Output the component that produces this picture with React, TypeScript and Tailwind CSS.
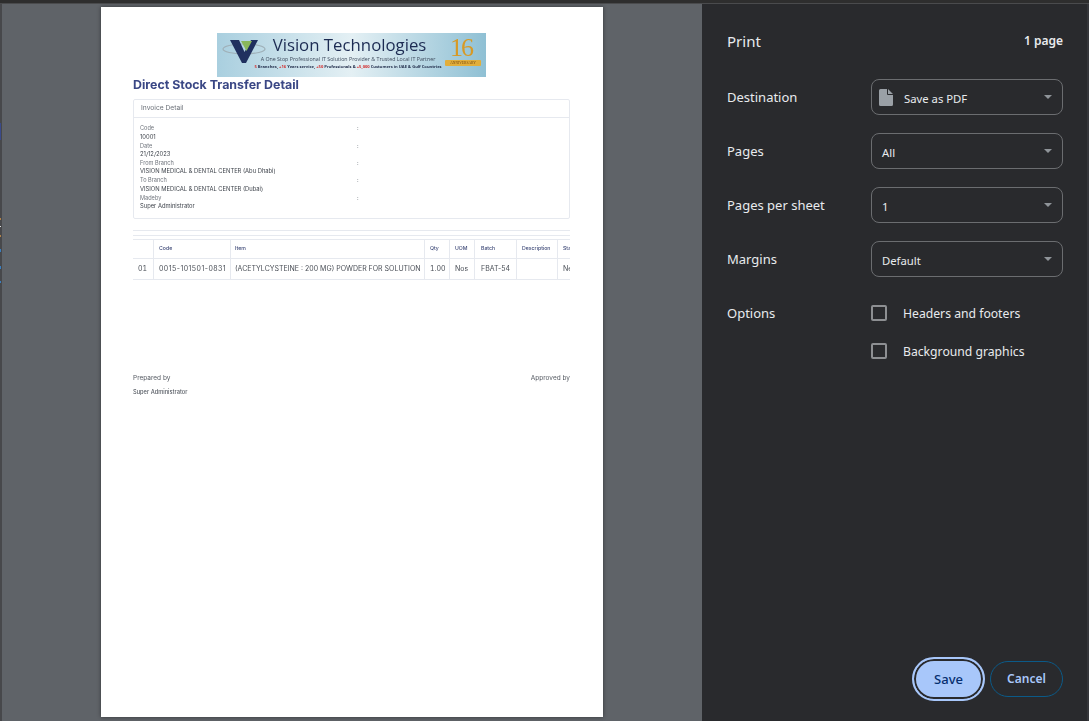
import React from "react";

const pageFont = { fontFamily: '"Inter", "Noto Sans", sans-serif' };

const details = [
  ["Code", "10001"],
  ["Date", "21/12/2023"],
  ["From Branch", "VISION MEDICAL & DENTAL CENTER (Abu Dhabi)"],
  ["To Branch", "VISION MEDICAL & DENTAL CENTER (Dubai)"],
  ["Madeby", "Super Administrator"],
];

const columns = [
  { label: "", value: "01", width: "w-[21px]", pad: "pl-[5px]", cell: "tabular-nums" },
  { label: "Code", value: "0015-101501-0831", width: "w-[77px]", pad: "pl-[5px]", cell: "tracking-[0.45px]" },
  { label: "Item", value: "(ACETYLCYSTEINE : 200 MG) POWDER FOR SOLUTION", width: "w-[194px]", pad: "pl-[4px]", cell: "text-[6.8px]" },
  { label: "Qty", value: "1.00", width: "w-[25px]", pad: "pl-[5px]", cell: "tabular-nums" },
  { label: "UOM", value: "Nos", width: "w-[25px]", pad: "pl-[5px]", cell: "" },
  { label: "Batch", value: "FBAT-54", width: "w-[42px]", pad: "pl-[6px]", cell: "" },
  { label: "Description", value: "", width: "w-[41px]", pad: "pl-[5px]", cell: "" },
  { label: "Status", value: "New", width: "w-[40px]", pad: "pl-[5px]", cell: "" },
];

// bits of the page behind the dialog that show along the left edge
const edgeMarks = [
  { gap: "mt-[119px]", size: "h-[17px]", color: "bg-[#3a4a8a]" },
  { gap: "mt-[78px]", size: "h-[2px]", color: "bg-[#b0824a]" },
  { gap: "mt-[6px]", size: "h-[1px]", color: "bg-[#e0e0e0]" },
  { gap: "mt-[8px]", size: "h-[2px]", color: "bg-[#b0824a]" },
  { gap: "mt-[12px]", size: "h-[3px]", color: "bg-[#3a7fc0]" },
  { gap: "mt-[14px]", size: "h-[3px]", color: "bg-[#3a7fc0]" },
  { gap: "mt-[12px]", size: "h-[2px]", color: "bg-[#3a7fc0]" },
];

function Logo() {
  return (
    <div className="mx-auto flex h-[44px] w-[269px] bg-gradient-to-r from-[#a9cfdf] via-[#e4f0f4] to-[#8fc0d4]">
      <svg width="46" height="44" viewBox="0 0 46 44" className="ml-[4px] shrink-0">
        <ellipse cx="23" cy="16" rx="21" ry="5" fill="none" stroke="#9fb0b8" strokeWidth="1.2" />
        <path d="M9 7h9l5.500 12L30 7h7L25 30h-4Z" fill="#20305f" />
        <path d="M20 8h11l-5.500 10Z" fill="#8ab85a" />
      </svg>
      <div className="flex min-w-0 flex-1 flex-col items-center pt-[1px]" style={{ fontFamily: '"Open Sans", sans-serif' }}>
        <div className="-ml-[14px] text-[16.800px] leading-[22px] whitespace-nowrap text-[#1c2b52]">Vision Technologies</div>
        <div className="-ml-[17px] text-[5.3px] leading-[7px] whitespace-nowrap text-[#3d4a5c]">
          A One Stop Professional IT Solution Provider &amp; Trusted Local IT Partner
        </div>
        <div className="-ml-[17px] text-[4.100px] leading-[8px] font-bold whitespace-nowrap text-[#24304d]">
          <span className="text-[#d22b2b]">5</span> Branches, <span className="text-[#d22b2b]">+16</span> Years service,{" "}
          <span className="text-[#d22b2b]">+50</span> Professionals &amp; <span className="text-[#d22b2b]">+5,000</span>{" "}
          Customers in UAE &amp; Gulf Countries
        </div>
      </div>
      <div className="mr-[6px] flex w-[34px] shrink-0 flex-col items-center pt-[4px]" style={{ fontFamily: '"Liberation Serif", serif' }}>
        <div className="-ml-[4px] text-[26px] leading-[22px] tracking-[-2px] text-[#d79a26]">16</div>
        <div className="mt-[1px] w-[36px] rounded-[1px] bg-[#e2ae3a] text-center text-[3.600px] leading-[6px] text-[#7a4a10]">ANNIVERSARY</div>
      </div>
    </div>
  );
}

function InvoicePage() {
  return (
    <div className="mx-auto mt-[3px] h-[710px] w-[502px] bg-white pt-[26px] pr-[33px] pl-[32px] shadow-[0_0_4px_rgba(0,0,0,0.45)]" style={pageFont}>
      <div className="blur-[0.25px]">
        <Logo />
        <h1 className="mt-[1px] text-[12.4px] leading-[14px] font-bold text-[#3a4785]">Direct Stock Transfer Detail</h1>
        <div className="mt-[7px] h-[120px] rounded-[2px] border border-[#e6e9ef]">
          <div className="flex h-[18px] items-center border-b border-[#e6e9ef] pl-[7px] text-[6.7px] text-[#6b7078]">Invoice Detail</div>
          <div className="pt-[6px] pl-[6px]">
            {details.map(([label, value]) => (
              <div key={label}>
                <div className="flex h-[8.7px] items-center text-[5.6px] text-[#6f747c]">
                  <span className="w-[217px]">{label}</span>
                  <span>:</span>
                </div>
                <div className="flex h-[8.7px] items-center text-[5.8px] text-[#3f444c]">{value}</div>
              </div>
            ))}
          </div>
        </div>
        <div className="mt-[11px] h-[6px] border-y border-[#e6e9ef]" />
        <div className="mt-[3px] flex w-[437px] overflow-hidden border-y border-[#e6e9ef]">
          {columns.map((col) => (
            <div key={col.label} className={`${col.width} shrink-0 border-r border-[#e6e9ef] whitespace-nowrap`}>
              <div className={`flex h-[19px] items-center border-b border-[#e6e9ef] text-[5.2px] font-medium text-[#3f4a78] ${col.pad}`}>{col.label}</div>
              <div className={`flex h-[20px] items-center text-[7px] text-[#4a4f57] ${col.pad} ${col.cell}`}>{col.value}</div>
            </div>
          ))}
        </div>
        <div className="mt-[94px] flex justify-between text-[6.500px] text-[#555a62]">
          <span>Prepared by</span>
          <span>Approved by</span>
        </div>
        <div className="mt-[4px] text-[5.700px] font-medium text-[#555a62]">Super Administrator</div>
      </div>
    </div>
  );
}

function SelectField({ label, value, icon }: { label: string; value: string; icon?: boolean }) {
  return (
    <div className="flex h-[36px] items-center">
      <div className="w-[144px] pt-[2px] text-[13px] text-[#e8eaed]">{label}</div>
      <div className="flex h-[36px] w-[192px] items-center rounded-[8px] border border-[#6b6d70] pr-[10px] pl-[10px]">
        {icon && (
          <svg width="14" height="17" viewBox="0 0 14 17" className="mr-[11px] -ml-[3px] shrink-0">
            <path d="M1.500 0h7.500l5 5v10.500a1.500 1.500 0 0 1-1.500 1.500h-11a1.500 1.500 0 0 1-1.500-1.500v-14a1.500 1.500 0 0 1 1.500-1.500Z" fill="#9aa0a6" />
            <path d="M8.500 0v5.500H14" fill="none" stroke="#292a2d" strokeWidth="1" />
          </svg>
        )}
        <span className="flex-1 pt-[4px] text-[11.300px] text-[#e8eaed]">{value}</span>
        <span className="h-0 w-0 border-x-[4px] border-t-[4px] border-x-transparent border-t-[#8f9499]" />
      </div>
    </div>
  );
}

function CheckRow({ label }: { label: string }) {
  return (
    <div className="flex h-[16px] items-center">
      <span className="h-[16px] w-[16px] rounded-[2px] border-2 border-[#8d8f92]" />
      <span className="ml-[16px] pt-[2px] text-[12.200px] text-[#e8eaed]">{label}</span>
    </div>
  );
}

export default function App() {
  return (
    <div className="flex h-[721px] w-[1089px] flex-col overflow-hidden bg-[#5f6368]">
      <div className="h-[4px] shrink-0 border-b border-[#4a4b4d] bg-[#2e2e2e]" />
      <div className="flex min-h-0 flex-1">
        <div className="flex w-[2px] shrink-0 flex-col bg-[#47484b]">
          {edgeMarks.map((mark, i) => (
            <div key={i} className={`${mark.gap} ${mark.size} ${mark.color} w-[1px] shrink-0`} />
          ))}
        </div>
        <main className="w-[700px] shrink-0 bg-[#5f6368]">
          <InvoicePage />
        </main>
        <aside className="flex w-[385px] shrink-0 flex-col bg-[#292a2d] pr-[24px] pl-[25px]" style={{ fontFamily: '"Noto Sans", sans-serif' }}>
          <div className="mt-[25px] flex h-[24px] items-center justify-between">
            <span className="text-[15px] text-[#e8eaed]">Print</span>
            <span className="text-[12px] font-semibold text-[#e8eaed]">1 page</span>
          </div>
          <div className="mt-[26px] flex flex-col gap-[18px]">
            <SelectField label="Destination" value="Save as PDF" icon />
            <SelectField label="Pages" value="All" />
            <SelectField label="Pages per sheet" value="1" />
            <SelectField label="Margins" value="Default" />
          </div>
          <div className="mt-[28px] flex">
            <div className="w-[144px] text-[13px] leading-[16px] text-[#e8eaed]">Options</div>
            <div className="flex flex-col gap-[22px]">
              <CheckRow label="Headers and footers" />
              <CheckRow label="Background graphics" />
            </div>
          </div>
          <div className="mt-auto mb-[20px] flex items-center justify-end gap-[5px]">
            <button className="h-[44px] w-[73px] rounded-full border-2 border-[#a8c7fa] bg-[#a8c7fa] pt-[1px] text-[13px] font-medium text-[#062e6f] shadow-[inset_0_0_0_2px_#292a2d]">Save</button>
            <button className="h-[36px] w-[73px] rounded-full border border-[#0b5a88] text-[12px] font-semibold text-[#a8c7fa]">Cancel</button>
          </div>
        </aside>
        <div className="w-[2px] shrink-0 bg-[#35363a]" />
      </div>
    </div>
  );
}
